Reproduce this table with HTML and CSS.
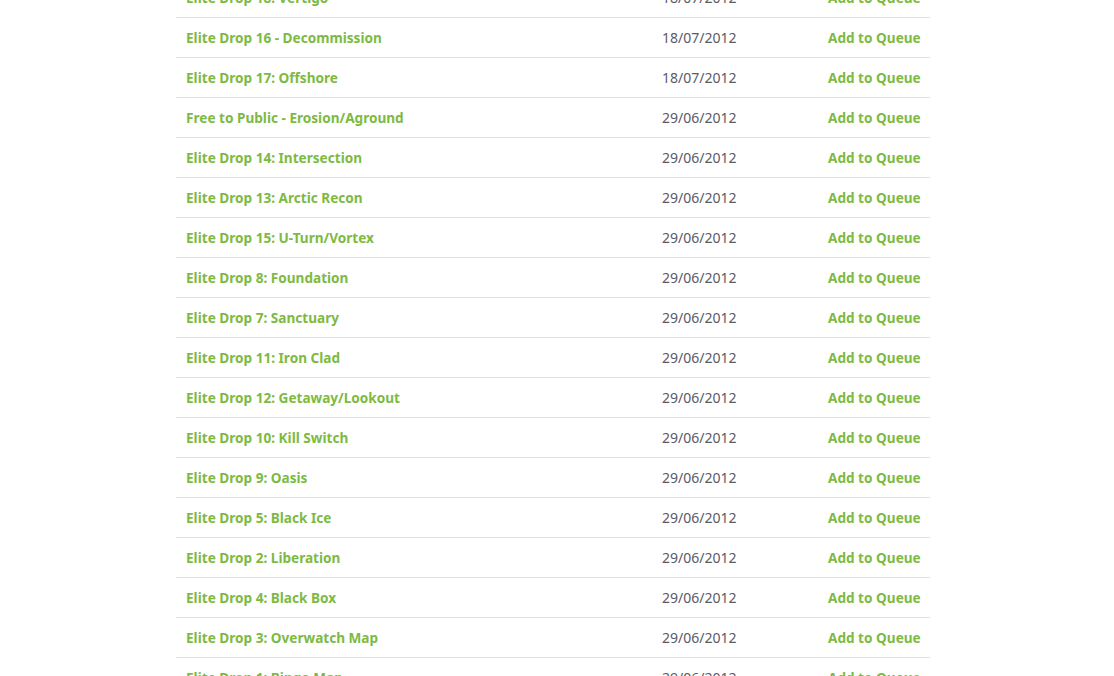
FILE: index.html
```html
<!DOCTYPE html>
<html>
<head>
<meta charset="utf-8">
<link rel="stylesheet" href="styles.css">
</head>
<body>
<div class="list">
  <div class="row"><a class="name">Elite Drop 18: Vertigo</a><span class="date">18/07/2012</span><a class="add">Add to Queue</a></div>
  <div class="row"><a class="name">Elite Drop 16 - Decommission</a><span class="date">18/07/2012</span><a class="add">Add to Queue</a></div>
  <div class="row"><a class="name">Elite Drop 17: Offshore</a><span class="date">18/07/2012</span><a class="add">Add to Queue</a></div>
  <div class="row"><a class="name">Free to Public - Erosion/Aground</a><span class="date">29/06/2012</span><a class="add">Add to Queue</a></div>
  <div class="row"><a class="name">Elite Drop 14: Intersection</a><span class="date">29/06/2012</span><a class="add">Add to Queue</a></div>
  <div class="row"><a class="name">Elite Drop 13: Arctic Recon</a><span class="date">29/06/2012</span><a class="add">Add to Queue</a></div>
  <div class="row"><a class="name">Elite Drop 15: U-Turn/Vortex</a><span class="date">29/06/2012</span><a class="add">Add to Queue</a></div>
  <div class="row"><a class="name">Elite Drop 8: Foundation</a><span class="date">29/06/2012</span><a class="add">Add to Queue</a></div>
  <div class="row"><a class="name">Elite Drop 7: Sanctuary</a><span class="date">29/06/2012</span><a class="add">Add to Queue</a></div>
  <div class="row"><a class="name">Elite Drop 11: Iron Clad</a><span class="date">29/06/2012</span><a class="add">Add to Queue</a></div>
  <div class="row"><a class="name">Elite Drop 12: Getaway/Lookout</a><span class="date">29/06/2012</span><a class="add">Add to Queue</a></div>
  <div class="row"><a class="name">Elite Drop 10: Kill Switch</a><span class="date">29/06/2012</span><a class="add">Add to Queue</a></div>
  <div class="row"><a class="name">Elite Drop 9: Oasis</a><span class="date">29/06/2012</span><a class="add">Add to Queue</a></div>
  <div class="row"><a class="name">Elite Drop 5: Black Ice</a><span class="date">29/06/2012</span><a class="add">Add to Queue</a></div>
  <div class="row"><a class="name">Elite Drop 2: Liberation</a><span class="date">29/06/2012</span><a class="add">Add to Queue</a></div>
  <div class="row"><a class="name">Elite Drop 4: Black Box</a><span class="date">29/06/2012</span><a class="add">Add to Queue</a></div>
  <div class="row"><a class="name">Elite Drop 3: Overwatch Map</a><span class="date">29/06/2012</span><a class="add">Add to Queue</a></div>
  <div class="row"><a class="name">Elite Drop 1: Bingo Map</a><span class="date">29/06/2012</span><a class="add">Add to Queue</a></div>
</div>
</body>
</html>
```
FILE: styles.css
```css
html, body {
  margin: 0;
  padding: 0;
  background: #fff;
  overflow: hidden;
}
body {
  font-family: "Noto Sans", "Open Sans", sans-serif;
  font-size: 13.6px;
}
.list {
  width: 754px;
  margin: -22px 0 0 176px;
}
.row {
  display: grid;
  grid-template-columns: 1fr 166px 92px;
  align-items: center;
  height: 39px;
  border-bottom: 1px solid #e2e2e2;
  padding: 0 10px;
  box-sizing: content-box;
}
.name {
  color: #7dba42;
  font-weight: bold;
}
.date {
  color: #5a5a66;
  font-size: 14px;
}
.add {
  color: #7dba42;
  font-weight: bold;
  text-align: right;
  white-space: nowrap;
}
```
